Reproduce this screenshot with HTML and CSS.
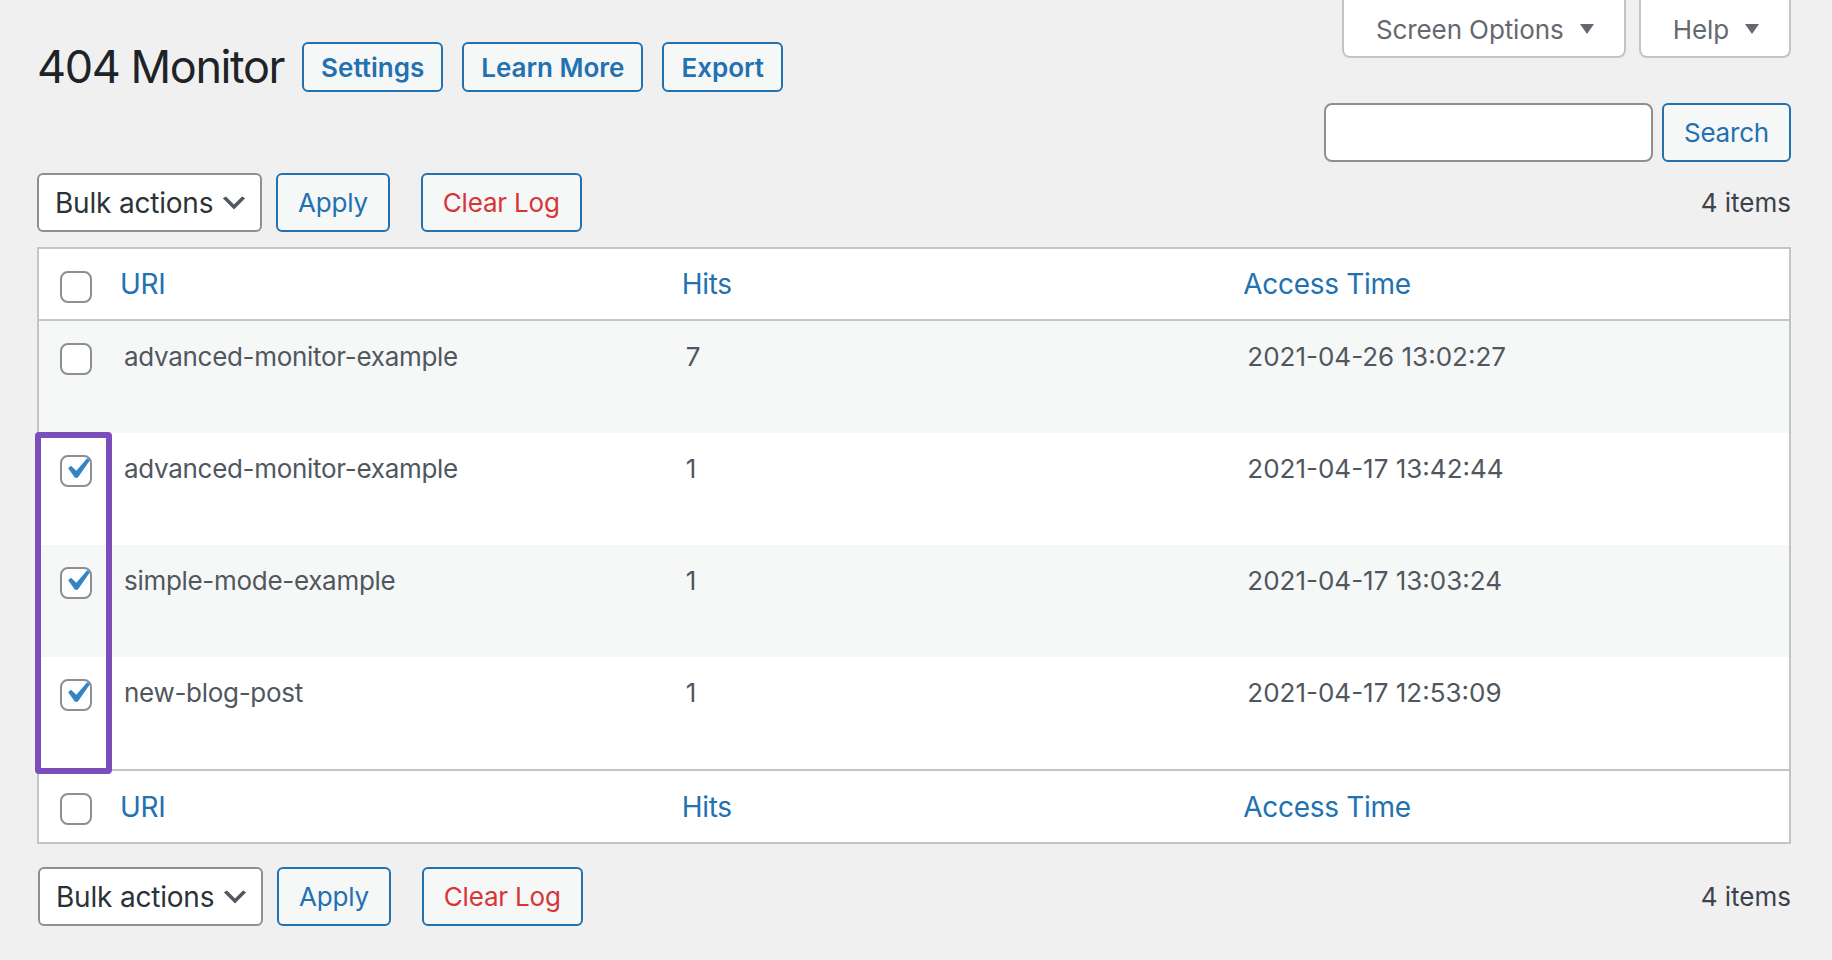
FILE: index.html
```html
<!DOCTYPE html>
<html lang="en">
<head>
  <meta charset="UTF-8" />
  <meta name="viewport" content="width=device-width, initial-scale=1.0"/>
  <title>404 Monitor</title>
  <link rel="stylesheet" href="styles.css">
</head>
<body>
  <div class="wrap">
    <div class="top">
      <div class="title-row">
        <h1>404 Monitor</h1>
        <a class="title-action" href="#">Settings</a>
        <a class="title-action" href="#">Learn More</a>
        <a class="title-action" href="#">Export</a>
      </div>
      <div class="meta-links">
        <button class="meta-tab">Screen Options <svg class="tri" viewBox="0 0 14 10"><path d="M0 0h14L7 10z"/></svg></button>
        <button class="meta-tab">Help <svg class="tri" viewBox="0 0 14 10"><path d="M0 0h14L7 10z"/></svg></button>
      </div>
    </div>

    <div class="search-row">
      <input class="search-input" type="search">
      <button class="btn">Search</button>
    </div>

    <div class="tablenav">
      <div class="bulk">
        <div class="select">Bulk actions <svg class="chev" viewBox="0 0 20 20"><path d="M5 6l5 5 5-5 2 1-7 7-7-7 2-1z"/></svg></div>
        <button class="btn">Apply</button>
        <button class="btn btn-delete">Clear Log</button>
      </div>
      <span class="num">4 items</span>
    </div>

    <div class="table-wrap">
      <table class="list">
        <thead>
          <tr>
            <th class="check"><span class="cb"></span></th>
            <th><a href="#">URI</a></th>
            <th><a href="#">Hits</a></th>
            <th><a href="#">Access Time</a></th>
          </tr>
        </thead>
        <tbody>
          <tr>
            <th class="check"><span class="cb"></span></th>
            <td class="uri">advanced-monitor-example</td>
            <td>7</td>
            <td>2021-04-26 13:02:27</td>
          </tr>
          <tr>
            <th class="check"><span class="cb checked"><svg viewBox="0 0 20 20"><path d="M14.83 4.89l1.34.94-5.81 8.38H9.02L5.78 9.670l1.34-1.25 2.57 2.4z"/></svg></span></th>
            <td class="uri">advanced-monitor-example</td>
            <td>1</td>
            <td>2021-04-17 13:42:44</td>
          </tr>
          <tr>
            <th class="check"><span class="cb checked"><svg viewBox="0 0 20 20"><path d="M14.83 4.89l1.34.94-5.81 8.38H9.02L5.78 9.67l1.34-1.25 2.57 2.4z"/></svg></span></th>
            <td class="uri">simple-mode-example</td>
            <td>1</td>
            <td>2021-04-17 13:03:24</td>
          </tr>
          <tr>
            <th class="check"><span class="cb checked"><svg viewBox="0 0 20 20"><path d="M14.83 4.89l1.34.94-5.81 8.38H9.02L5.78 9.67l1.34-1.25 2.57 2.4z"/></svg></span></th>
            <td class="uri">new-blog-post</td>
            <td>1</td>
            <td>2021-04-17 12:53:09</td>
          </tr>
        </tbody>
        <tfoot>
          <tr>
            <th class="check"><span class="cb"></span></th>
            <th><a href="#">URI</a></th>
            <th><a href="#">Hits</a></th>
            <th><a href="#">Access Time</a></th>
          </tr>
        </tfoot>
      </table>
      <div class="highlight"></div>
    </div>

    <div class="tablenav bottom">
      <div class="bulk">
        <div class="select">Bulk actions <svg class="chev" viewBox="0 0 20 20"><path d="M5 6l5 5 5-5 2 1-7 7-7-7 2-1z"/></svg></div>
        <button class="btn">Apply</button>
        <button class="btn btn-delete">Clear Log</button>
      </div>
      <span class="num">4 items</span>
    </div>
  </div>
</body>
</html>
```

FILE: styles.css
```css
body {
  margin: 0;
  padding: 0 41px 0 37px;
  background-color: #f0f0f1;
  font-family: Inter, 'Noto Sans', sans-serif;
  color: #3c434a;
}
a {
  color: #2271b1;
  text-decoration: none;
}
.top {
  display: flex;
  justify-content: space-between;
  align-items: flex-start;
}
.title-row {
  display: flex;
  align-items: center;
  gap: 19px;
  height: 50px;
  margin-top: 42px;
}
h1 {
  margin: 0 -1px 0 0;
  font-size: 45px;
  font-weight: 400;
  letter-spacing: -1.4px;
  line-height: 50px;
  color: #1d2327;
}
.title-action {
  display: inline-flex;
  align-items: center;
  height: 50px;
  box-sizing: border-box;
  padding: 0 17px;
  border: 2px solid #2271b1;
  border-radius: 6px;
  background-color: #f6f7f7;
  font-size: 26px;
  font-weight: 600;
}
.meta-links {
  display: flex;
  gap: 13px;
}
.meta-tab {
  display: flex;
  align-items: center;
  height: 58px;
  box-sizing: border-box;
  padding: 2px 30px 0 32px;
  border: 2px solid #c3c4c7;
  border-top: none;
  border-radius: 0 0 8px 8px;
  background-color: #fff;
  color: #646970;
  font-family: inherit;
  font-size: 26px;
  letter-spacing: -0.1px;
}
.tri {
  width: 14px;
  height: 10px;
  margin-left: 16px;
  fill: #646970;
}
.search-row {
  display: flex;
  justify-content: flex-end;
  gap: 9px;
  margin-top: 11px;
}
.search-input {
  width: 329px;
  height: 59px;
  box-sizing: border-box;
  border: 2px solid #8c8f94;
  border-radius: 8px;
  background-color: #fff;
}
.btn {
  height: 59px;
  box-sizing: border-box;
  padding: 0 20px;
  border: 2px solid #2271b1;
  border-radius: 6px;
  background-color: #f6f7f7;
  color: #2271b1;
  font-family: inherit;
  font-size: 26px;
  letter-spacing: -0.2px;
}
.btn-delete {
  color: #d63638;
  margin-left: 17px;
}
.tablenav {
  display: flex;
  justify-content: space-between;
  align-items: center;
  margin-top: 11px;
  height: 59px;
}
.tablenav.bottom {
  margin-top: 23px;
  padding-left: 1px;
}
.bulk {
  display: flex;
  gap: 14px;
}
.select {
  display: flex;
  align-items: center;
  width: 225px;
  height: 59px;
  box-sizing: border-box;
  padding: 0 10px 0 16px;
  border: 2px solid #8c8f94;
  border-radius: 6px;
  background-color: #fff;
  color: #2c3338;
  font-size: 28px;
  letter-spacing: -0.2px;
}
.chev {
  width: 32px;
  height: 32px;
  margin-left: auto;
  fill: #50575e;
}
.num {
  font-size: 26px;
  color: #3c434a;
}
.table-wrap {
  position: relative;
  margin-top: 15px;
  border: 2px solid #c3c4c7;
  background-color: #fff;
}
.list {
  width: 100%;
  border-collapse: collapse;
  table-layout: fixed;
}
.list th, .list td {
  text-align: left;
  vertical-align: top;
  font-weight: 400;
}
.list thead th, .list tfoot th {
  padding: 16px 16px 15px;
  font-size: 28px;
  line-height: 39px;
  letter-spacing: -0.3px;
}
.list thead th {
  border-bottom: 2px solid #c3c4c7;
}
.list tfoot th {
  border-top: 2px solid #c3c4c7;
  padding-top: 17px;
}
.list td {
  padding: 16px 20px 57px;
  font-size: 26px;
  line-height: 39px;
  color: #50575e;
}
.list td.uri {
  letter-spacing: -0.3px;
}
.list tbody tr:nth-child(odd) {
  background-color: #f6f7f7;
}
.list .check {
  width: 65px;
  box-sizing: border-box;
  padding: 22px 0 0 21px;
}
.cb {
  display: flex;
  align-items: center;
  justify-content: center;
  width: 32px;
  height: 32px;
  box-sizing: border-box;
  border: 2px solid #8c8f94;
  border-radius: 8px;
  background-color: #fff;
}
.cb svg {
  flex-shrink: 0;
  width: 42px;
  height: 42px;
  margin: -4px 0 0 2px;
  fill: #3582c4;
}
.highlight {
  position: absolute;
  left: -4px;
  top: 183px;
  width: 77px;
  height: 342px;
  box-sizing: border-box;
  border: 6px solid #7c4dbd;
  border-radius: 4px;
}
```
